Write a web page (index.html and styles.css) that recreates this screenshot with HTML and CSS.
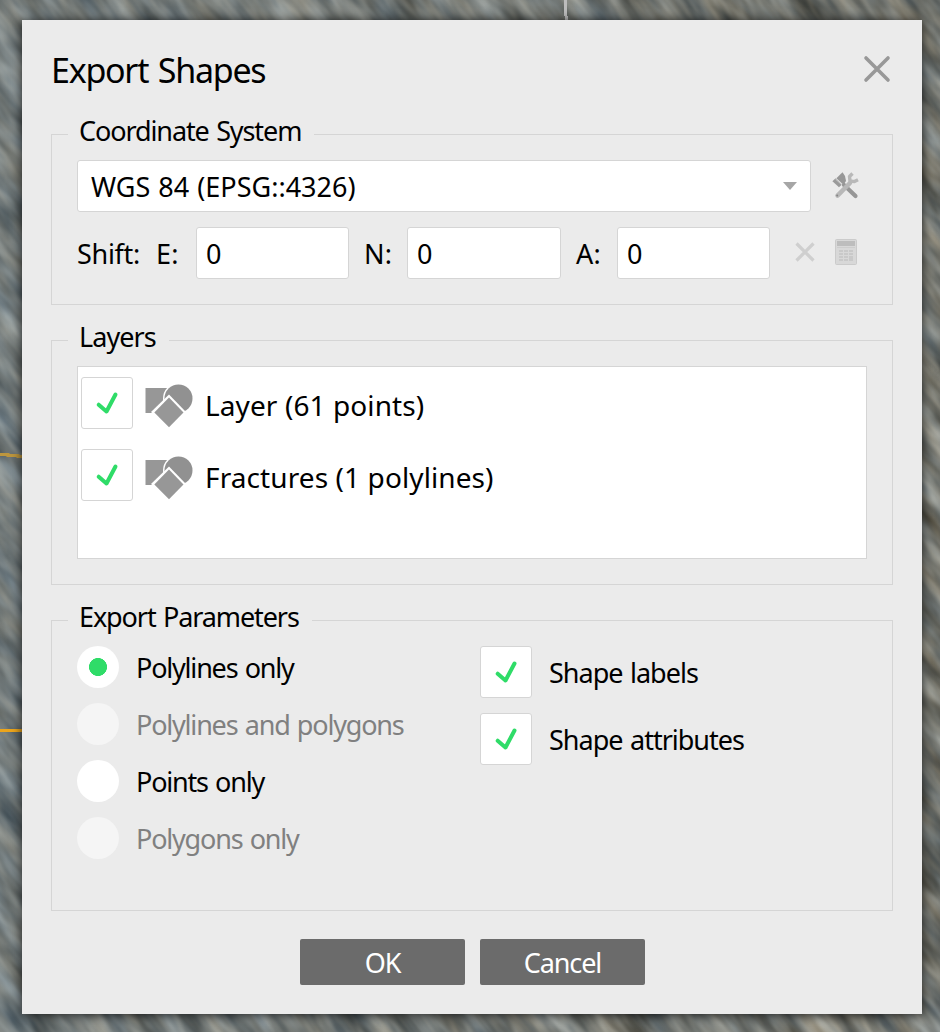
FILE: index.html
```html
<!DOCTYPE html>
<html lang="en">
<head>
<meta charset="utf-8">
<title>Export Shapes</title>
<link rel="stylesheet" href="styles.css">
</head>
<body>
<svg class="scene" width="940" height="1032" viewBox="0 0 940 1032" aria-hidden="true">
  <defs>
    <filter id="rock" x="0" y="0" width="100%" height="100%" color-interpolation-filters="sRGB">
      <feTurbulence type="fractalNoise" baseFrequency="0.016 0.055" numOctaves="3" seed="12"/>
      <feColorMatrix values="0.72 0.12 0 0 0.03  0.7 0.07 0.08 0 0.04  0.66 0 0.17 0 0.03  0 0 0 0 1"/>
    </filter>
    <linearGradient id="tint"><stop offset="0" stop-color="#71808a" stop-opacity=".35"/><stop offset="1" stop-color="#7b766c" stop-opacity=".2"/></linearGradient>
    <symbol id="check" viewBox="0 0 50 50"><path d="M16.700 26.700 24.500 33.500 33.500 16.500" fill="none" stroke="#2fdc68" stroke-width="4" stroke-linecap="round" stroke-linejoin="round"/></symbol>
    <symbol id="shapes" viewBox="0 0 48 44">
      <path d="M.5 4h25v25H.5z" fill="#979797"/>
      <circle cx="33.500" cy="14.500" r="15.500" fill="#fff"/>
      <circle cx="33.500" cy="14.500" r="14" fill="#919191"/>
      <path d="M24 10.500 41 28 24 45 6 28z" fill="#fff"/>
      <path d="M24 13.500 38.500 28.500 24 43.300 9.300 28.500z" fill="#979797"/>
    </symbol>
  </defs>
  <rect x="-700" y="-700" width="2400" height="2400" filter="url(#rock)" transform="rotate(52 470 516)"/>
  <rect width="940" height="1032" fill="url(#tint)"/>
  <path d="M0 454.500H8V455.500H18V456.500H22" fill="none" stroke="#bd963e" stroke-width="3"/>
  <path d="M0 730.500H22" stroke="#eca51c" stroke-width="3"/>
  <path d="M565.500 0V16M566.500 16V20" stroke="#bcbcbc" stroke-width="3"/>
</svg>
<main class="dialog">
  <header class="titlebar">
    <h1 class="title">Export Shapes</h1>
    <svg class="close" width="28" height="28" viewBox="0 0 28 28"><path d="M3 3 25 25M25 3 3 25" stroke="#989898" stroke-width="3.600" stroke-linecap="round"/></svg>
  </header>

  <section class="group group-crs">
    <h2 class="legend">Coordinate System</h2>
    <div class="crs-row">
      <div class="combo"><span class="combo-text">WGS 84 (EPSG::4326)</span>
        <svg class="arrow" width="14" height="8" viewBox="0 0 14 8"><path d="M0 0H14L7 8Z" fill="#a6a6a6"/></svg>
      </div>
      <svg class="tools" width="28" height="28" viewBox="0 0 28 28">
        <path d="M12 14 23.500 25" stroke="#969696" stroke-width="4.200" stroke-linecap="round"/>
        <path d="M.4 10.300 3.600 7.200 10 13.400 7 16.200Z" fill="#9a9a9a"/>
        <path d="M4.400 7.200 10.500 1.200 13 5 14 10 11.500 13.700Z" fill="#979797"/>
        <path d="M3.500 8 10 14" stroke="#d8d8d8" stroke-width=".8"/>
        <path d="M5.500 24.700 18 12" stroke="#b8b8b8" stroke-width="4.500" stroke-linecap="round"/>
        <path d="M20.500 2.500 17.500 5.500 18 10 22.500 10.600 26 8.800" fill="none" stroke="#b8b8b8" stroke-width="3.400" stroke-linejoin="round"/>
        <circle cx="5.200" cy="24.500" r="1" fill="#858585"/>
      </svg>
    </div>
    <div class="shift-row">
      <span class="shift-label">Shift:</span>
      <span class="axis axis-e">E:</span><div class="field">0</div>
      <span class="axis axis-n">N:</span><div class="field field-n">0</div>
      <span class="axis axis-a">A:</span><div class="field">0</div>
      <svg class="clear" width="20" height="20" viewBox="0 0 20 20"><path d="M1.500 1.500 18.500 18.500M18.500 1.500 1.500 18.500" stroke="#cfcfcf" stroke-width="3.200"/></svg>
      <svg class="calc" width="22" height="26" viewBox="0 0 22 26">
        <rect x=".5" y=".5" width="21" height="25" rx="1" fill="#d8d8d8" stroke="#cbcbcb"/>
        <path d="M2 2H20V7H2Z" fill="#bdbdbd"/>
        <path d="M2 8.500H20" stroke="#cdcdcd"/>
        <path d="M4 12H8M9 12H13M14 12H18M4 15H8M9 15H13M14 15H18M4 18H8M9 18H13M4 21H8M9 21H13" stroke="#c9c9c9" stroke-width="2"/>
        <path d="M14 17H18V22H14Z" fill="#c9c9c9"/>
      </svg>
    </div>
  </section>

  <section class="group group-layers">
    <h2 class="legend legend-layers">Layers</h2>
    <div class="list">
      <div class="item"><span class="box"><svg width="50" height="50"><use href="#check"/></svg></span><svg class="shape-icon" width="48" height="44"><use href="#shapes"/></svg><span class="item-text">Layer (61 points)</span></div>
      <div class="item"><span class="box"><svg width="50" height="50"><use href="#check"/></svg></span><svg class="shape-icon" width="48" height="44"><use href="#shapes"/></svg><span class="item-text">Fractures (1 polylines)</span></div>
    </div>
  </section>

  <section class="group group-params">
    <h2 class="legend">Export Parameters</h2>
    <div class="params">
      <div class="radios">
        <div class="radio"><span class="dot dot-on"></span><span>Polylines only</span></div>
        <div class="radio disabled"><span class="dot"></span><span>Polylines and polygons</span></div>
        <div class="radio"><span class="dot"></span><span>Points only</span></div>
        <div class="radio disabled"><span class="dot"></span><span>Polygons only</span></div>
      </div>
      <div class="checks">
        <div class="check"><span class="box"><svg width="50" height="50"><use href="#check"/></svg></span><span>Shape labels</span></div>
        <div class="check"><span class="box"><svg width="50" height="50"><use href="#check"/></svg></span><span>Shape attributes</span></div>
      </div>
    </div>
  </section>

  <footer class="actions"><div class="button">OK</div><div class="button">Cancel</div></footer>
</main>
</body>
</html>
```
FILE: styles.css
```css
* { box-sizing: border-box; }
body {
  margin: 0;
  width: 940px;
  height: 1032px;
  overflow: hidden;
  padding: 20px 18px 18px 22px;
  font: 27px/34px "Noto Sans", "Open Sans", sans-serif;
  letter-spacing: -0.8px;
  color: #000;
  white-space: nowrap;
}
svg { display: block; flex: none; }
.scene { position: absolute; left: 0; top: 0; z-index: -1; }
.dialog {
  width: 900px;
  height: 994px;
  padding: 0 29px;
  background: #ebebeb;
  box-shadow: 0 1px 10px rgba(0, 0, 0, .75);
}
.titlebar { display: flex; justify-content: space-between; height: 114px; padding: 28px 2px 0 0; }
.title { margin: 0; font-size: 34px; font-weight: 400; line-height: 44px; letter-spacing: -1.25px; word-spacing: 2px; }
.close { margin-top: 7px; }
.group { width: 842px; border: 1px solid #d5d5d5; padding: 0 25px; }
.group-crs { height: 171px; }
.group-layers { height: 245px; margin-top: 35px; }
.group-params { height: 291px; margin-top: 35px; }
.legend {
  width: max-content;
  height: 34px;
  margin: -21px 0 12px -9px;
  padding: 0 13px 0 11px;
  background: #ebebeb;
  font-size: 27px;
  font-weight: 400;
  letter-spacing: -1.1px;
  word-spacing: 1.500px;
}
.legend-layers { letter-spacing: -0.95px; }
.crs-row { display: flex; align-items: center; gap: 21px; }
.combo {
  display: flex;
  align-items: center;
  justify-content: space-between;
  width: 734px;
  height: 52px;
  padding: 2px 13px 0 13px;
  border: 1px solid #d5d5d5;
  border-radius: 3px;
  background: #fff;
}
.combo-text { letter-spacing: 0; word-spacing: 1px; }
.arrow, .tools { margin-top: -2px; }
.shift-row { display: flex; align-items: center; margin-top: 15px; height: 52px; }
.shift-label { width: 79px; padding-top: 1px; letter-spacing: -0.3px; }
.axis { padding-top: 1px; letter-spacing: 0.3px; }
.axis-e { width: 40px; }
.axis-n { width: 58px; padding-left: 15px; }
.axis-a { width: 56px; padding-left: 15px; }
.field { width: 153px; height: 52px; padding: 9px 9px; border: 1px solid #d5d5d5; border-radius: 3px; background: #fff; }
.field-n { width: 154px; }
.clear { margin: -3px 0 0 25px; }
.calc { margin: -2px 0 0 20px; }
.list { width: 790px; height: 193px; padding: 10px 3px; border: 1px solid #d5d5d5; background: #fff; }
.item { display: flex; align-items: center; height: 52px; margin-bottom: 20px; }
.box { flex: none; width: 52px; height: 52px; border: 1px solid #d5d5d5; border-radius: 3px; background: #fff; }
.shape-icon { margin: 6px 12px 0; }
.item-text { padding-top: 4px; font-size: 28px; letter-spacing: 0.1px; }
.params { display: flex; }
.radios { width: 403px; display: flex; flex-direction: column; gap: 15px; letter-spacing: -1.2px; word-spacing: 1.500px; }
.radio { display: flex; align-items: center; gap: 17px; height: 42px; }
.radio > :last-child, .check > :last-child { padding-top: 1px; }
.dot { width: 42px; height: 42px; border-radius: 50%; background: #fff; }
.dot-on { background: radial-gradient(circle, #2fdc68 0 8.700px, #fff 9.300px); }
.disabled { color: #808080; }
.disabled .dot { background: #f5f5f5; }
.checks { display: flex; flex-direction: column; gap: 15px; letter-spacing: -1px; word-spacing: 1.500px; }
.check { display: flex; align-items: center; gap: 17px; height: 52px; }
.actions { display: flex; justify-content: center; gap: 15px; padding: 28px 0 0 1px; }
.button { width: 165px; height: 46px; padding-top: 7px; border-radius: 2px; background: #6b6b6b; color: #fff; text-align: center; letter-spacing: -1.1px; }
```
